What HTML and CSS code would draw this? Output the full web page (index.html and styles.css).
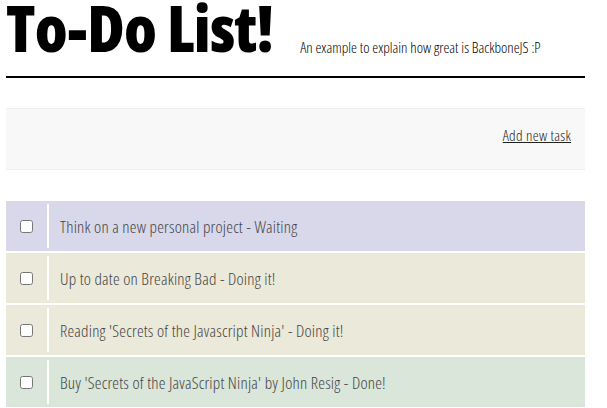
FILE: index.html
```html
<!DOCTYPE html>
<html>
<head>
<meta charset="utf-8">
<link rel="stylesheet" href="styles.css">
</head>
<body>
<div class="page">
  <header class="header">
    <h1 class="title">To-Do List!</h1>
    <span class="subtitle">An example to explain how great is BackboneJS :P</span>
  </header>
  <div class="toolbar">
    <a class="add-link" href="#">Add new task</a>
  </div>
  <ul class="tasks">
    <li class="task waiting"><span class="check"><input type="checkbox"></span><span class="label">Think on a new personal project - Waiting</span></li>
    <li class="task doing"><span class="check"><input type="checkbox"></span><span class="label">Up to date on Breaking Bad - Doing it!</span></li>
    <li class="task doing"><span class="check"><input type="checkbox"></span><span class="label">Reading 'Secrets of the Javascript Ninja' - Doing it!</span></li>
    <li class="task done"><span class="check"><input type="checkbox"></span><span class="label">Buy 'Secrets of the JavaScript Ninja' by John Resig - Done!</span></li>
  </ul>
</div>
</body>
</html>
```

FILE: styles.css
```css
html, body {
  margin: 0;
  padding: 0;
  background: #fff;
}
body {
  font-family: "Open Sans", "Liberation Sans", sans-serif;
  font-stretch: 75%;
  color: #333;
}
.page {
  width: 579px;
  margin-left: 6px;
}
.header {
  display: flex;
  align-items: flex-start;
  gap: 27px;
  border-bottom: 2px solid #000;
  height: 76px;
}
.title {
  margin: -16px 0 0;
  font-size: 64px;
  font-weight: 800;
  line-height: 87px;
  letter-spacing: -0.7px;
  color: #000;
}
.subtitle {
  margin-top: 37px;
  font-size: 15px;
  font-weight: 300;
  line-height: 20px;
  color: #000;
}
.toolbar {
  margin-top: 30px;
  height: 62px;
  box-sizing: border-box;
  background: #f8f8f8;
  border-top: 1px solid #eee;
  border-bottom: 1px solid #eee;
  display: flex;
  align-items: center;
  justify-content: flex-end;
  padding-right: 14px;
  padding-bottom: 8px;
}
.add-link {
  color: #222;
  font-size: 15px;
  font-weight: 300;
  letter-spacing: 0.3px;
  text-decoration: underline;
}
.tasks {
  list-style: none;
  margin: 31px 0 0;
  padding: 0;
}
.task {
  display: flex;
  align-items: center;
  height: 50px;
  margin-bottom: 2px;
}
.waiting { background: #d9d8ea; }
.doing { background: #ebe9d9; }
.done { background: #d9e6d9; }
.check {
  width: 41px;
  height: 44px;
  display: flex;
  align-items: center;
  justify-content: center;
  border-right: 2px solid #fff;
}
.check input {
  margin: 0;
  width: 13px;
  height: 13px;
}
.label {
  padding-left: 11px;
  font-size: 17px;
  font-weight: 300;
  letter-spacing: 0.2px;
  color: #444;
}
```
